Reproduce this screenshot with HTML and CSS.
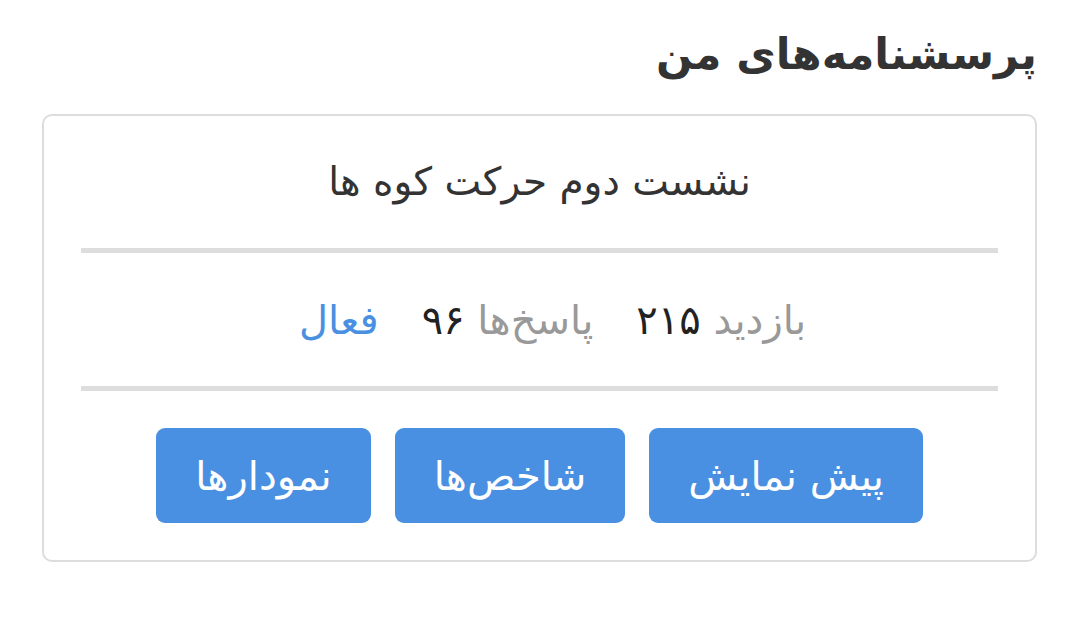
FILE: index.html
```html
<!DOCTYPE html>
<html lang="fa" dir="rtl">
<head>
<meta charset="utf-8">
<link rel="stylesheet" href="styles.css">
</head>
<body>
<div class="page">
  <h1 class="page-title">پرسشنامه‌های من</h1>
  <div class="card">
    <div class="card-title">نشست دوم حرکت کوه ها</div>
    <div class="rule"></div>
    <div class="stats">
      <span class="stat"><span class="label">بازدید</span> <span class="value">۲۱۵</span></span>
      <span class="stat"><span class="label">پاسخ‌ها</span> <span class="value">۹۶</span></span>
      <span class="stat status">فعال</span>
    </div>
    <div class="rule"></div>
    <div class="actions">
      <button class="btn">پیش نمایش</button>
      <button class="btn">شاخص‌ها</button>
      <button class="btn">نمودارها</button>
    </div>
  </div>
</div>
</body>
</html>
```
FILE: styles.css
```css
html, body {
  margin: 0;
  padding: 0;
  background: #fff;
}
body {
  font-family: "DejaVu Sans", sans-serif;
  color: #333;
  direction: rtl;
}
.page {
  padding: 0 43px 0 42px;
}
.page-title {
  margin: 0;
  padding-top: 22px;
  height: 114px;
  box-sizing: border-box;
  font-size: 43px;
  font-weight: bold;
  line-height: 64px;
  color: #333;
}
.card {
  border: 2px solid #ddd;
  border-radius: 10px;
  padding: 0 37px;
}
.card-title {
  height: 130px;
  padding-bottom: 2px;
  display: flex;
  align-items: center;
  justify-content: center;
  font-size: 39px;
}
.rule {
  height: 5px;
  background: #ddd;
}
.stats {
  height: 133px;
  display: flex;
  align-items: center;
  justify-content: center;
  gap: 43px;
  padding-left: 26px;
  font-size: 40px;
}
.label {
  color: #999;
}
.value {
  color: #222;
}
.status {
  color: #4a90e2;
}
.actions {
  display: flex;
  justify-content: center;
  gap: 24px;
  padding: 37px 0;
}
.btn {
  font-family: "DejaVu Sans", sans-serif;
  font-size: 40px;
  color: #fff;
  background: #4a90e2;
  border: none;
  border-radius: 9px;
  height: 95px;
  padding: 0 39px;
}
```
